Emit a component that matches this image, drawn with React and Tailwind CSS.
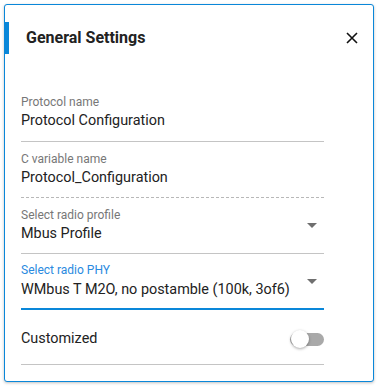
import React from "react";

function Arrow() {
  return (
    <svg width="10" height="5" viewBox="0 0 10 5" className="block">
      <path d="M0 0 L10 0 L5 5 Z" fill="#6f6f6f" />
    </svg>
  );
}

export default function App() {
  return (
    <div className="w-[381px] h-[386px] bg-white pt-[4px] pl-[4px]" style={{ fontFamily: "Roboto, 'Liberation Sans', sans-serif" }}>
      <div className="w-[370px] h-[378px] border border-[#0a87d9] rounded-[3px] shadow-[0_1px_3px_rgba(0,0,0,0.25)] bg-white">
        {/* header */}
        <div className="mt-[17px] h-[32px] flex items-center">
          <div className="w-[4px] h-[32px] bg-[#0a87d9]" />
          <div className="ml-[17px] text-[16px] font-bold text-[#222]">General Settings</div>
          <div className="ml-auto mr-[15px]">
            <svg width="12" height="12" viewBox="0 0 12 12" className="block">
              <path d="M1 1 L11 11 M11 1 L1 11" stroke="#111" strokeWidth="1.6" />
            </svg>
          </div>
        </div>

        <div className="ml-[16px] w-[303px]">
          {/* field 1 */}
          <div className="mt-[41px] text-[12px] leading-[14px] text-[#777]">Protocol name</div>
          <div className="mt-[2px] text-[14.4px] leading-[20px] text-[#222]">Protocol Configuration</div>
          <div className="mt-[10px] h-px bg-[#c4c4c4]" />

          {/* field 2 */}
          <div className="mt-[10px] text-[12px] leading-[14px] text-[#777]">C variable name</div>
          <div className="mt-[2px] text-[14.4px] leading-[20px] text-[#222]">Protocol_Configuration</div>
          <div className="mt-[9px] border-t border-dashed border-[#b8b8b8]" />

          {/* field 3 */}
          <div className="mt-[10px] text-[12px] leading-[14px] text-[#777]">Select radio profile</div>
          <div className="flex items-start justify-between">
            <div className="mt-[2px] text-[14.4px] leading-[20px] text-[#222]">Mbus Profile</div>
            <div className="mt-[1px] mr-[7px]"><Arrow /></div>
          </div>
          <div className="mt-[9px] h-px bg-[#c4c4c4]" />

          {/* field 4 */}
          <div className="mt-[9px] text-[12px] leading-[14px] text-[#2a8ae0]">Select radio PHY</div>
          <div className="flex items-start justify-between">
            <div className="mt-[3px] text-[14.4px] leading-[20px] text-[#222]">WMbus T M2O, no postamble (100k, 3of6)</div>
            <div className="mt-[2px] mr-[7px]"><Arrow /></div>
          </div>
          <div className="mt-[8px] h-[2px] bg-[#0a87d9]" />

          {/* customized */}
          <div className="mt-[8px] h-[42px] flex items-center justify-between">
            <div className="text-[14.4px] text-[#222]">Customized</div>
            <div className="relative w-[34px] h-[20px] flex items-center">
              <div className="w-[34px] h-[13px] rounded-full bg-[#a9a9a9]" />
              <div className="absolute left-[1px] top-[1px] w-[18px] h-[18px] rounded-full bg-white shadow-[0_1px_3px_rgba(0,0,0,0.35)]" />
            </div>
          </div>
          <div className="mt-[4px] h-px bg-[#c4c4c4]" />
        </div>
      </div>
    </div>
  );
}
